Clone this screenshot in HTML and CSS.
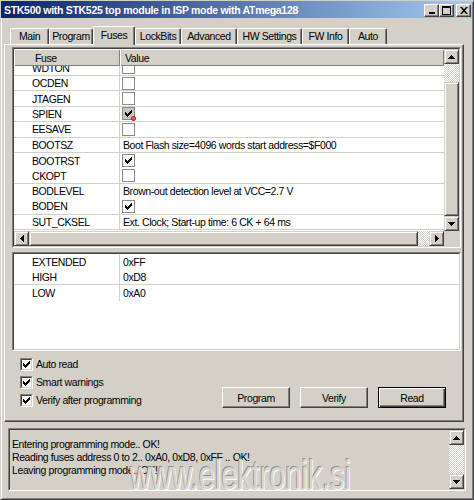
FILE: index.html
```html
<!DOCTYPE html>
<html>
<head>
<meta charset="utf-8">
<title>STK500</title>
<link rel="stylesheet" href="styles.css">
</head>
<body>
<div class="window">
  <div class="titlebar">
    <span class="title">STK500 with STK525 top module in ISP mode with ATmega128</span>
    <div class="tbtns">
      <span class="tbtn"><svg width="8" height="7" viewBox="0 0 8 7"><path d="M1 5h6v2H1z"/></svg></span>
      <span class="tbtn"><svg width="9" height="9" viewBox="0 0 9 9"><path fill-rule="evenodd" d="M0 0h9v9H0zM1 2v6h7V2z"/></svg></span>
      <span class="tbtn close"><svg width="8" height="7" viewBox="0 0 8 7"><path d="M0 0h2l2 2.2L6 0h2L5 3.5 8 7H6L4 4.8 2 7H0l3-3.5z"/></svg></span>
    </div>
  </div>

  <div class="tabs">
    <div class="tab w-main">Main</div>
    <div class="tab w-program">Program</div>
    <div class="tab sel w-fuses">Fuses</div>
    <div class="tab w-lock">LockBits</div>
    <div class="tab w-adv">Advanced</div>
    <div class="tab w-hw">HW Settings</div>
    <div class="tab w-fw">FW Info</div>
    <div class="tab w-auto">Auto</div>
  </div>

  <div class="panel">
    <div class="lv lv1">
      <div class="lv-in">
        <div class="lv-main">
          <div class="lv-content">
            <div class="lv-header">
              <div class="hcell c1">Fuse</div>
              <div class="hcell c2">Value</div>
            </div>
            <div class="lv-body">
              <div class="rows">
                <div class="row line"><div class="cell1">WDTON</div><div class="cell2"><span class="lcb"></span></div></div>
                <div class="row line"><div class="cell1">OCDEN</div><div class="cell2"><span class="lcb"></span></div></div>
                <div class="row line"><div class="cell1">JTAGEN</div><div class="cell2"><span class="lcb"></span></div></div>
                <div class="row line"><div class="cell1">SPIEN</div><div class="cell2"><span class="lcb gray"><svg width="7" height="7" viewBox="0 0 7 7"><path d="M6 0h1v3h-1v1h-1v1h-1v1h-1v1h-1v-1h-1v-1h-1v-3h1v1h1v1h1v-1h1v-1h1v-1h1z"/></svg><span class="lock"></span></span></div></div>
                <div class="row line"><div class="cell1">EESAVE</div><div class="cell2"><span class="lcb"></span></div></div>
                <div class="row line"><div class="cell1">BOOTSZ</div><div class="cell2">Boot Flash size=4096 words start address=$F000</div></div>
                <div class="row"><div class="cell1">BOOTRST</div><div class="cell2"><span class="lcb"><svg width="7" height="7" viewBox="0 0 7 7"><path d="M6 0h1v3h-1v1h-1v1h-1v1h-1v1h-1v-1h-1v-1h-1v-3h1v1h1v1h1v-1h1v-1h1v-1h1z"/></svg></span></div></div>
                <div class="row line"><div class="cell1">CKOPT</div><div class="cell2"><span class="lcb"></span></div></div>
                <div class="row"><div class="cell1">BODLEVEL</div><div class="cell2">Brown-out detection level at VCC=2.7 V</div></div>
                <div class="row line"><div class="cell1">BODEN</div><div class="cell2"><span class="lcb"><svg width="7" height="7" viewBox="0 0 7 7"><path d="M6 0h1v3h-1v1h-1v1h-1v1h-1v1h-1v-1h-1v-1h-1v-3h1v1h1v1h1v-1h1v-1h1v-1h1z"/></svg></span></div></div>
                <div class="row line"><div class="cell1">SUT_CKSEL</div><div class="cell2">Ext. Clock; Start-up time: 6 CK + 64 ms</div></div>
              </div>
            </div>
          </div>
          <div class="vscroll v1">
            <span class="sbtn"><svg width="7" height="4" viewBox="0 0 7 4"><path d="M3 0h1v1h1v1h1v1h1v1H0V3h1V2h1V1h1z"/></svg></span>
            <span class="dither d1"></span>
            <span class="thumb t1"></span>
            <span class="sbtn"><svg width="7" height="4" viewBox="0 0 7 4"><path d="M0 0h7v1H6v1H5v1H4v1H3V3H2V2H1V1H0z"/></svg></span>
          </div>
        </div>
        <div class="hscroll">
          <span class="sbtn"><svg width="4" height="7" viewBox="0 0 4 7"><path d="M0 3h1V2h1V1h1V0h1v7H3V6H2V5H1V4H0z"/></svg></span>
          <span class="thumb th"></span>
          <span class="dither dh"></span>
          <span class="sbtn"><svg width="4" height="7" viewBox="0 0 4 7"><path d="M0 0h1v1h1v1h1v1h1v1H3v1H2v1H1v1H0z"/></svg></span>
          <span class="corner"></span>
        </div>
      </div>
    </div>

    <div class="lv lv2">
      <div class="lv-in white">
        <div class="rows2">
          <div class="row"><div class="cell1">EXTENDED</div><div class="cell2">0xFF</div></div>
          <div class="row line"><div class="cell1">HIGH</div><div class="cell2">0xD8</div></div>
          <div class="row"><div class="cell1">LOW</div><div class="cell2">0xA0</div></div>
        </div>
      </div>
    </div>

    <div class="bottom">
      <div class="checks">
        <label class="chk"><span class="cb"><span class="cb-in"><svg width="7" height="7" viewBox="0 0 7 7"><path d="M6 0h1v3h-1v1h-1v1h-1v1h-1v1h-1v-1h-1v-1h-1v-3h1v1h1v1h1v-1h1v-1h1v-1h1z"/></svg></span></span>Auto read</label>
        <label class="chk"><span class="cb"><span class="cb-in"><svg width="7" height="7" viewBox="0 0 7 7"><path d="M6 0h1v3h-1v1h-1v1h-1v1h-1v1h-1v-1h-1v-1h-1v-3h1v1h1v1h1v-1h1v-1h1v-1h1z"/></svg></span></span>Smart warnings</label>
        <label class="chk"><span class="cb"><span class="cb-in"><svg width="7" height="7" viewBox="0 0 7 7"><path d="M6 0h1v3h-1v1h-1v1h-1v1h-1v1h-1v-1h-1v-1h-1v-3h1v1h1v1h1v-1h1v-1h1v-1h1z"/></svg></span></span>Verify after programming</label>
      </div>
      <div class="buttons">
        <span class="btn">Program</span>
        <span class="btn">Verify</span>
        <span class="btn default">Read</span>
      </div>
    </div>
  </div>

  <div class="log">
    <div class="log-in">
      <div class="log-text">
        <div>Entering programming mode.. OK!</div>
        <div>Reading fuses address 0 to 2.. 0xA0, 0xD8, 0xFF .. OK!</div>
        <div>Leaving programming mode.. OK!</div>
      </div>
      <div class="vscroll v2">
        <span class="sbtn"><svg width="7" height="4" viewBox="0 0 7 4"><path d="M3 0h1v1h1v1h1v1h1v1H0V3h1V2h1V1h1z"/></svg></span>
        <span class="dither grow"></span>
        <span class="sbtn"><svg width="7" height="4" viewBox="0 0 7 4"><path d="M0 0h7v1H6v1H5v1H4v1H3V3H2V2H1V1H0z"/></svg></span>
      </div>
    </div>
    <div class="watermark">www.elektronik.si</div>
  </div>
</div>
</body>
</html>
```

FILE: styles.css
```css
* { box-sizing: border-box; }
html, body { margin: 0; padding: 0; }
body {
  width: 474px; height: 500px; overflow: hidden;
  background: #d4d0c8;
  font-family: "Liberation Sans", Arial, sans-serif;
  font-size: 10.5px; letter-spacing: -0.4px; color: #000;
}
.window {
  position: relative;
  width: 474px; height: 500px;
  background: #d4d0c8;
  border: 1px solid; border-color: #d4d0c8 #404040 #404040 #d4d0c8;
  box-shadow: inset 1px 1px #fff, inset -1px -1px #808080;
  display: flex; flex-direction: column;
}
/* title bar */
.titlebar {
  height: 17px; margin-right: 1px;
  display: flex; align-items: center;
  padding-left: 3px;
  background: linear-gradient(to right, #0a246a, #a6caf0);
  color: #fff;
}
.title {
  font-weight: bold; font-size: 10.5px; letter-spacing: -0.3px; white-space: nowrap;
}
.tbtns { margin-left: auto; align-self: flex-start; margin-top: 3px; display: flex; padding-right: 1px; }
.tbtn {
  width: 15px; height: 13px; background: #d4d0c8;
  border: 1px solid; border-color: #fff #404040 #404040 #fff;
  box-shadow: inset -1px -1px #808080;
  display: flex; align-items: center; justify-content: center;
}
.tbtn.close { margin-left: 2px; }
.tbtn svg { display: block; fill: #000; }

/* tabs */
.tabs { display: flex; align-items: flex-end; height: 18px; margin: 8px 0 0 9px; }
.tab {
  position: relative;
  height: 16px; flex: none;
  display: flex; align-items: center; justify-content: center;
  background: #d4d0c8;
  border-top: 1px solid #fff; border-left: 1px solid #fff; border-right: 1px solid #404040;
  box-shadow: inset -1px 0 #808080;
  border-radius: 2px 2px 0 0;
  white-space: nowrap; padding-bottom: 1px;
}
.tab.sel { height: 19px; margin-bottom: -1px; z-index: 2; padding-bottom: 3px; }
.w-main { width: 39px; }
.w-program { width: 44px; }
.w-fuses { width: 42px; }
.w-lock { width: 46px; }
.w-adv { width: 56px; }
.w-hw { width: 65px; }
.w-fw { width: 47px; }
.w-auto { width: 38px; }

/* panel */
.panel {
  width: 460px; height: 378px; margin-left: 3px;
  border: 1px solid; border-color: #fff #404040 #404040 #fff;
  box-shadow: inset -1px -1px #808080;
  padding: 2px 2px 0 7px;
  display: flex; flex-direction: column;
}
.lv { border: 1px solid; border-color: #808080 #fff #fff #808080; flex: none; }
.lv-in {
  height: 100%;
  border: 1px solid; border-color: #404040 #d4d0c8 #d4d0c8 #404040;
  display: flex; flex-direction: column;
}
.lv-in.white { background: #fff; }
.lv1 { height: 201px; }
.lv-main { display: flex; height: 182px; flex: none; }
.lv-content { flex: 1; min-width: 0; display: flex; flex-direction: column; background: #fff; }
.lv-header { height: 17px; display: flex; flex: none; }
.hcell {
  background: #d4d0c8;
  box-shadow: inset 1px 1px #fff, inset -1px -1px #808080;
  display: flex; align-items: center;
}
.hcell.c1 { width: 106px; padding-left: 21px; }
.hcell.c2 { flex: 1; padding-left: 5px; }
.lv-body { flex: 1; overflow: hidden; }
.rows { margin-top: -5.4px; }
.rows2 { padding-top: 0.5px; }
.row { height: 15.4px; display: flex; }
.row.line { border-bottom: 1px solid #d4d0c8; }
.cell1 {
  width: 106px; flex: none;
  border-right: 1px solid #d4d0c8;
  padding-left: 18px;
  display: flex; align-items: center; white-space: nowrap;
}
.cell2 { flex: 1; padding-left: 3px; display: flex; align-items: center; white-space: nowrap; overflow: hidden; }
.lcb {
  position: relative;
  width: 13px; height: 13px; margin-left: -1px;
  border: 1px solid #8a8a8a; background: #fff;
  display: flex; align-items: center; justify-content: center;
}
.lcb.gray { background: #c8c4bc; }
.lcb svg { display: block; fill: #000; }
.lock {
  position: absolute; right: -2px; bottom: -2px;
  width: 5px; height: 5px; border-radius: 50%;
  background: #f06060; border: 1px solid #c00000;
}

/* scrollbars */
.vscroll { width: 15px; flex: none; display: flex; flex-direction: column; }
.hscroll { height: 15px; flex: none; display: flex; }
.sbtn {
  width: 15px; height: 15px; flex: none;
  background: #d4d0c8;
  border: 1px solid; border-color: #d4d0c8 #404040 #404040 #d4d0c8;
  box-shadow: inset 1px 1px #fff, inset -1px -1px #808080;
  display: flex; align-items: center; justify-content: center;
}
.sbtn svg { display: block; fill: #000; }
.dither { background: repeating-conic-gradient(#d4d0c8 0 25%, #fff 0 50%) 0 0 / 2px 2px; flex: none; }
.thumb {
  background: #d4d0c8; flex: none;
  border: 1px solid; border-color: #d4d0c8 #404040 #404040 #d4d0c8;
  box-shadow: inset 1px 1px #fff, inset -1px -1px #808080;
}
.d1 { height: 18px; }
.t1 { flex: 1; }
.th { width: 389px; }
.dh { width: 11px; }
.corner { width: 15px; flex: none; background: #d4d0c8; }
.grow { flex: 1; }

.lv2 { height: 99px; margin-top: 4px; }

/* checks & buttons */
.bottom { display: flex; align-items: flex-end; margin-top: 4px; }
.checks { margin-left: 8px; display: flex; flex-direction: column; }
.chk { height: 18px; display: flex; align-items: center; white-space: nowrap; }
.cb { width: 13px; height: 13px; margin-right: 3px; border: 1px solid; border-color: #808080 #fff #fff #808080; flex: none; }
.cb-in {
  width: 11px; height: 11px; background: #fff;
  border: 1px solid; border-color: #404040 #d4d0c8 #d4d0c8 #404040;
  display: flex; align-items: center; justify-content: center;
}
.cb-in svg { display: block; fill: #000; }
.buttons { margin-left: auto; margin-right: 15px; margin-bottom: 1px; display: flex; gap: 10px; }
.btn {
  width: 68px; height: 21px;
  background: #d4d0c8;
  border: 1px solid; border-color: #fff #404040 #404040 #fff;
  box-shadow: inset -1px -1px #808080;
  display: flex; align-items: center; justify-content: center;
}
.btn.default {
  border-color: #000;
  box-shadow: inset 1px 1px #fff, inset -1px -1px #404040, inset -2px -2px #808080;
}

/* log */
.log {
  position: relative;
  width: 458px; height: 63px; margin: 6px 0 0 7px;
  border: 1px solid; border-color: #808080 #fff #fff #808080;
}
.log-in {
  height: 100%;
  border: 1px solid; border-color: #404040 #d4d0c8 #d4d0c8 #404040;
  display: flex;
}
.log-text { flex: 1; padding: 8px 0 0 2px; line-height: 13px; white-space: nowrap; overflow: hidden; }
.watermark {
  position: absolute; left: 121px; top: 26px;
  font-size: 40px; line-height: 1; letter-spacing: 0;
  color: #d9d6cf;
  text-shadow: -1px -1px 0 #8c8c8c, 1px 1px 0 #fff;
  transform: scaleX(0.72); transform-origin: 0 0;
  white-space: nowrap; pointer-events: none;
}
```
